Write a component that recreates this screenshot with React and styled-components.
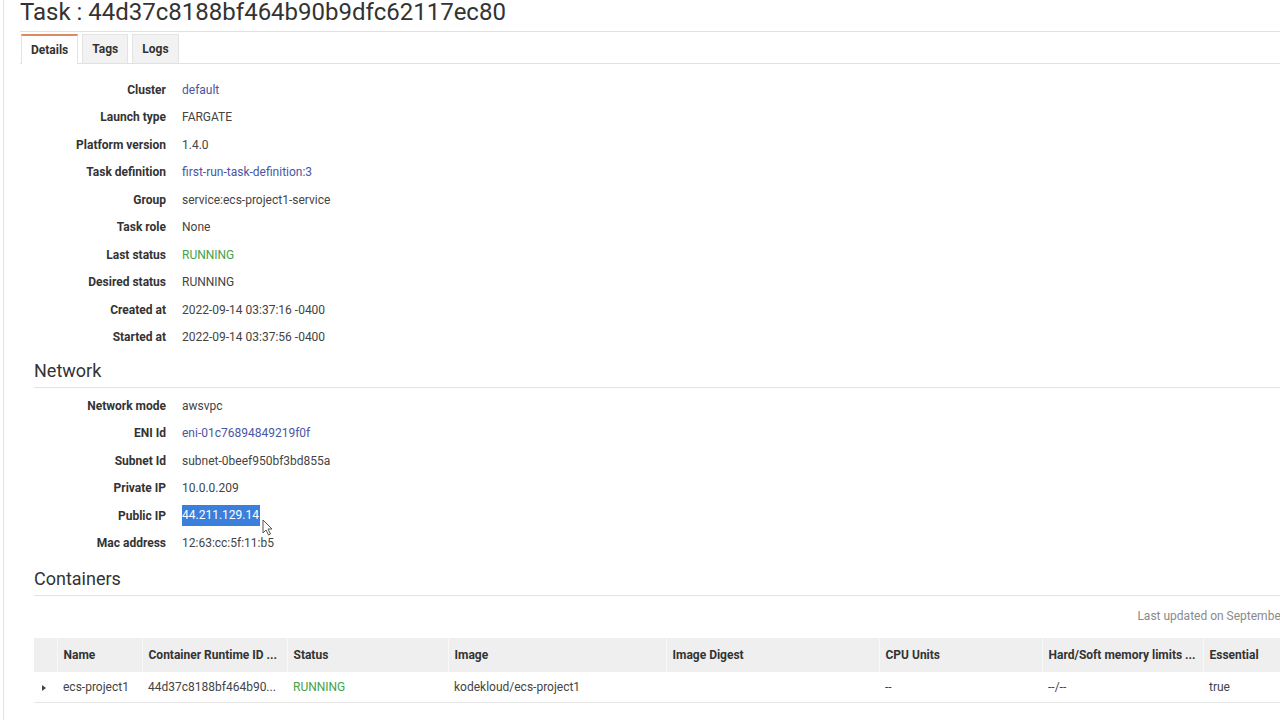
import React from "react"
import styled, { createGlobalStyle } from "styled-components"

const GlobalStyle = createGlobalStyle`
  html, body {
    margin: 0;
    padding: 0;
    background: #fff;
    overflow: hidden;
  }
  body {
    font-family: Roboto, "Liberation Sans", Arial, sans-serif;
    color: #444;
  }
`

const Page = styled.div`
  margin-left: 3px;
  border-left: 1px solid #e3e3e3;
  padding-left: 16px;
  width: 1429px;
  min-height: 720px;
`

const Title = styled.h1`
  margin: 0;
  font-size: 24px;
  font-weight: 400;
  line-height: 24px;
  height: 31px;
  color: #333;
  border-bottom: 1px solid #e1e1e1;
  box-sizing: content-box;
`

const TabBar = styled.div`
  display: flex;
  gap: 4px;
  margin-top: 2px;
  border-bottom: 1px solid #e1e1e1;
  padding-left: 1px;
`

const Tab = styled.div`
  box-sizing: border-box;
  padding: 0 9px;
  display: flex;
  align-items: center;
  font-size: 12px;
  font-weight: 700;
  color: #333;
  border: 1px solid #e3e3e3;
  border-bottom: none;
  background: ${(p) => (p.$active ? "#fff" : "#f2f2f3")};
  border-top: ${(p) => (p.$active ? "2px solid #dc8a62" : "1px solid #e3e3e3")};
  margin-bottom: ${(p) => (p.$active ? "-1px" : "0")};
  height: ${(p) => (p.$active ? "30px" : "29px")};
`

const Body = styled.div`
  padding-left: 14px;
`

const Fields = styled.div`
  display: grid;
  grid-template-columns: 132px 1fr;
  column-gap: 16px;
  grid-auto-rows: 27.5px;
  align-items: center;
  padding-top: ${(p) => p.$top || 0}px;
  font-size: 12px;
`

const Label = styled.div`
  text-align: right;
  font-weight: 700;
  color: #333;
`

const Value = styled.div`
  position: relative;
  color: ${(p) => (p.$tone === "link" ? "#4956a3" : p.$tone === "ok" ? "#45a14a" : "#444")};
  white-space: nowrap;
`

const Selected = styled.span`
  display: inline-block;
  background: #3a7fdc;
  color: #fff;
  line-height: 21px;
  padding-right: 1px;
`

const Cursor = styled.svg`
  position: absolute;
  left: 80px;
  top: 14px;
`

const SectionHeading = styled.h2`
  margin: 0;
  padding-top: ${(p) => p.$top}px;
  padding-bottom: 5px;
  margin-bottom: 4px;
  font-size: 18px;
  font-weight: 400;
  line-height: 22px;
  color: #333;
  border-bottom: 1px solid #e3e3e3;
`

const Updated = styled.div`
  display: flex;
  justify-content: flex-end;
  margin-top: 12px;
  font-size: 12px;
  line-height: 16px;
  color: #8a8a8a;
`

const Table = styled.table`
  margin-top: 14px;
  border-collapse: collapse;
  table-layout: fixed;
  width: 1366px;
  font-size: 12px;
`

const Th = styled.th`
  height: 34px;
  padding: 0 6px;
  background: #efeff0;
  text-align: left;
  font-weight: 700;
  color: #333;
  border-left: 1px solid #f8f8f8;
  white-space: nowrap;
  overflow: hidden;
  &:first-child {
    border-left: none;
  }
`

const Td = styled.td`
  height: 30px;
  padding: 0 6px;
  color: ${(p) => (p.$ok ? "#45a14a" : "#444")};
  border-bottom: 1px solid #e6e6e6;
  white-space: nowrap;
  overflow: hidden;
`

const Caret = styled.span`
  display: inline-block;
  width: 0;
  height: 0;
  border-top: 3.5px solid transparent;
  border-bottom: 3.5px solid transparent;
  border-left: 4px solid #444;
  margin-left: 2px;
`

const details = [
  ["Cluster", "default", "link"],
  ["Launch type", "FARGATE"],
  ["Platform version", "1.4.0"],
  ["Task definition", "first-run-task-definition:3", "link"],
  ["Group", "service:ecs-project1-service"],
  ["Task role", "None"],
  ["Last status", "RUNNING", "ok"],
  ["Desired status", "RUNNING"],
  ["Created at", "2022-09-14 03:37:16 -0400"],
  ["Started at", "2022-09-14 03:37:56 -0400"],
]

const network = [
  ["Network mode", "awsvpc"],
  ["ENI Id", "eni-01c76894849219f0f", "link"],
  ["Subnet Id", "subnet-0beef950bf3bd855a"],
  ["Private IP", "10.0.0.209"],
  ["Public IP", "44.211.129.14", "selected"],
  ["Mac address", "12:63:cc:5f:11:b5"],
]

const columns = [
  ["", 23],
  ["Name", 85],
  ["Container Runtime ID ...", 145],
  ["Status", 161],
  ["Image", 218],
  ["Image Digest", 213],
  ["CPU Units", 163],
  ["Hard/Soft memory limits ...", 161],
  ["Essential", 197],
]

const FieldList = ({ rows, top }) => (
  <Fields $top={top}>
    {rows.map(([label, value, tone]) => (
      <React.Fragment key={label}>
        <Label>{label}</Label>
        <Value $tone={tone}>
          {tone === "selected" ? (
            <>
              <Selected>{value}</Selected>
              <Cursor width="11" height="17" viewBox="0 0 11 17">
                <path d="M1 1 L1 14 L4 11 L6.5 16 L8.5 15 L6 10 L10 10 Z" fill="#fff" stroke="#555" strokeWidth="1" />
              </Cursor>
            </>
          ) : (
            value
          )}
        </Value>
      </React.Fragment>
    ))}
  </Fields>
)

export default function App() {
  return (
    <>
      <GlobalStyle />
      <Page>
        <Title>Task : 44d37c8188bf464b90b9dfc62117ec80</Title>
        <TabBar>
          <Tab $active>Details</Tab>
          <Tab>Tags</Tab>
          <Tab>Logs</Tab>
        </TabBar>
        <Body>
          <FieldList rows={details} top={12} />
          <SectionHeading $top={9}>Network</SectionHeading>
          <FieldList rows={network} />
          <SectionHeading $top={11}>Containers</SectionHeading>
          <Updated>Last updated on September 14, 2022 3:38:02 AM (0m ago)</Updated>
          <Table>
            <colgroup>
              {columns.map(([name, w]) => (
                <col key={name} style={{ width: w }} />
              ))}
            </colgroup>
            <thead>
              <tr>
                {columns.map(([name]) => (
                  <Th key={name}>{name}</Th>
                ))}
              </tr>
            </thead>
            <tbody>
              <tr>
                <Td><Caret /></Td>
                <Td>ecs-project1</Td>
                <Td>44d37c8188bf464b90...</Td>
                <Td $ok>RUNNING</Td>
                <Td>kodekloud/ecs-project1</Td>
                <Td></Td>
                <Td>--</Td>
                <Td>--/--</Td>
                <Td>true</Td>
              </tr>
            </tbody>
          </Table>
        </Body>
      </Page>
    </>
  )
}
